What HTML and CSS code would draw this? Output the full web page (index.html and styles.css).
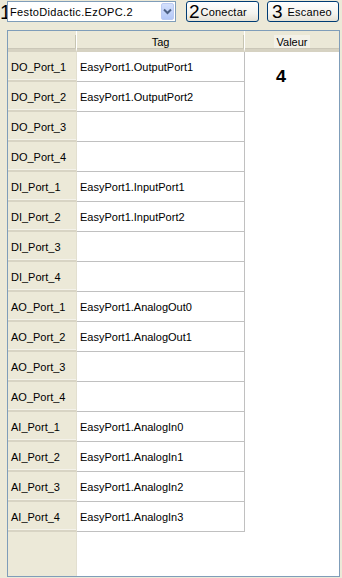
FILE: index.html
```html
<!DOCTYPE html>
<html>
<head>
<meta charset="utf-8">
<link rel="stylesheet" href="styles.css">
</head>
<body>
<div class="toolbar">
  <span class="num num-1">1</span>
  <div class="combo">
    <span class="combo-text">FestoDidactic.EzOPC.2</span>
    <span class="combo-btn"><svg width="9" height="7" viewBox="0 0 9 7"><path d="M1 1.5 L4.5 5 L8 1.5" fill="none" stroke="#4d6185" stroke-width="2"/></svg></span>
  </div>
  <button class="btn btn-connect"><span class="num">2</span><span class="btn-label">Conectar</span></button>
  <button class="btn btn-scan"><span class="num">3</span><span class="btn-label">Escaneo</span></button>
</div>
<div class="grid">
  <div class="hdr hdr-corner"></div>
  <div class="hdr hdr-tag">Tag</div>
  <div class="hdr hdr-val"><span class="hl">Valeur</span></div>

  <div class="rh">DO_Port_1</div><div class="tag">EasyPort1.OutputPort1</div><div class="val"><span class="big4">4</span></div>
  <div class="rh">DO_Port_2</div><div class="tag">EasyPort1.OutputPort2</div><div class="val"></div>
  <div class="rh">DO_Port_3</div><div class="tag"></div><div class="val"></div>
  <div class="rh">DO_Port_4</div><div class="tag"></div><div class="val"></div>
  <div class="rh">DI_Port_1</div><div class="tag">EasyPort1.InputPort1</div><div class="val"></div>
  <div class="rh">DI_Port_2</div><div class="tag">EasyPort1.InputPort2</div><div class="val"></div>
  <div class="rh">DI_Port_3</div><div class="tag"></div><div class="val"></div>
  <div class="rh">DI_Port_4</div><div class="tag"></div><div class="val"></div>
  <div class="rh">AO_Port_1</div><div class="tag">EasyPort1.AnalogOut0</div><div class="val"></div>
  <div class="rh">AO_Port_2</div><div class="tag">EasyPort1.AnalogOut1</div><div class="val"></div>
  <div class="rh">AO_Port_3</div><div class="tag"></div><div class="val"></div>
  <div class="rh">AO_Port_4</div><div class="tag"></div><div class="val"></div>
  <div class="rh">AI_Port_1</div><div class="tag">EasyPort1.AnalogIn0</div><div class="val"></div>
  <div class="rh">AI_Port_2</div><div class="tag">EasyPort1.AnalogIn1</div><div class="val"></div>
  <div class="rh">AI_Port_3</div><div class="tag">EasyPort1.AnalogIn2</div><div class="val"></div>
  <div class="rh">AI_Port_4</div><div class="tag">EasyPort1.AnalogIn3</div><div class="val"></div>

  <div class="rh-fill"></div><div class="fill"></div>
</div>
</body>
</html>
```
FILE: styles.css
```css
html, body {
  margin: 0;
  padding: 0;
  background: #ece9d8;
  font-family: "Liberation Sans", Arial, sans-serif;
  font-size: 11px;
  color: #000;
}
.toolbar {
  display: flex;
  align-items: flex-start;
  height: 30px;
  padding-top: 1px;
  box-sizing: border-box;
}
.num {
  font-family: "Liberation Sans", Arial, sans-serif;
  font-size: 20px;
  line-height: 20px;
}
.num-1 {
  width: 7px;
  margin-top: 1px;
  letter-spacing: -1px;
}
.combo {
  width: 169px;
  height: 21px;
  box-sizing: border-box;
  border: 1px solid #7f9db9;
  background: #fff;
  display: flex;
  align-items: center;
  padding: 0 1px 0 2px;
}
.combo-text {
  flex: 1;
  font-size: 11px;
  letter-spacing: 0.35px;
}
.combo-btn {
  width: 13px;
  height: 17px;
  box-sizing: border-box;
  border: 1px solid #bccbf2;
  border-radius: 2px;
  background: linear-gradient(#d4e0fc, #b3c8f7);
  display: flex;
  align-items: center;
  justify-content: center;
}
.btn {
  height: 21px;
  box-sizing: border-box;
  border: 1px solid #003c74;
  border-radius: 3px;
  background: linear-gradient(#ffffff 0%, #f4f3ee 60%, #e4e1d6 100%);
  font-family: "Liberation Sans", Arial, sans-serif;
  font-size: 11px;
  padding: 0 0 0 2px;
  display: flex;
  align-items: center;
  color: #000;
}
.btn-connect {
  width: 73px;
  margin-left: 10px;
}
.btn-scan {
  width: 72px;
  margin-left: 8px;
  padding-left: 4px;
}
.btn .num {
  font-size: 19px;
  line-height: 19px;
}
.btn-label { letter-spacing: 0.2px; }
.btn-connect .btn-label { margin-left: 1px; }
.btn-scan .btn-label { margin-left: 5px; }

.grid {
  margin-left: 7px;
  width: 333px;
  height: 547px;
  box-sizing: border-box;
  border: 1px solid #7f9db9;
  display: grid;
  grid-template-columns: 69px 168px 94px;
  grid-template-rows: 21px repeat(16, 30px) 1fr;
  background: #fff;
}
.hdr {
  background: #ebe8d7;
  border-bottom: 3px solid #d6d2c2;
  box-shadow: inset 0 -1px 0 #cbc7b8;
  display: flex;
  align-items: center;
  justify-content: center;
  padding-top: 3px;
  box-sizing: border-box;
  position: relative;
}
.hdr-corner, .hdr-tag {
  border-right: 1px solid #fff;
}
.hdr-corner::after, .hdr-tag::after {
  content: "";
  position: absolute;
  right: 0;
  top: 4px;
  height: 13px;
  width: 1px;
  background: #c7c5b2;
}
.hl {
  background: #f3f1e8;
  padding: 1px 3px 0;
}
.rh {
  background: #ece9d8;
  border-bottom: 2px solid #d8d4c4;
  box-shadow: inset 0 -1px 0 #f4f2ea;
  border-right: 1px solid #e2dfd0;
  display: flex;
  align-items: center;
  padding-left: 3px;
  padding-top: 2px;
  box-sizing: border-box;
}
.tag {
  border-right: 1px solid #c0c0c0;
  border-bottom: 1px solid #c0c0c0;
  display: flex;
  align-items: center;
  padding-left: 3px;
  padding-top: 1px;
  box-sizing: border-box;
}
.val {
  background: #fff;
}
.big4 {
  display: block;
  font-family: "Liberation Sans", Arial, sans-serif;
  font-weight: bold;
  font-size: 18px;
  line-height: 18px;
  margin: 16px 0 0 31px;
}
.rh-fill {
  background: #ece9d8;
  border-right: 1px solid #e2dfd0;
}
.fill {
  grid-column: 2 / 4;
  background: #fff;
}
```
